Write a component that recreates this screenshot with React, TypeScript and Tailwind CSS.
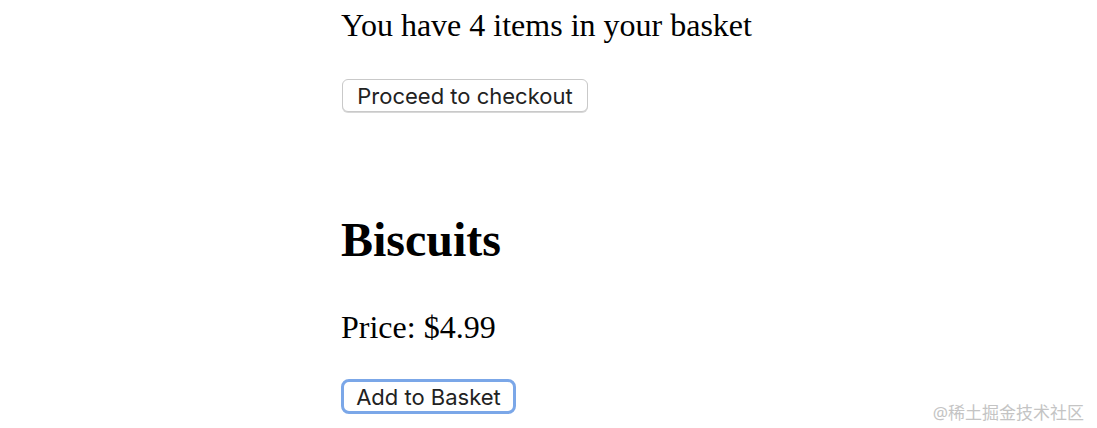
export default function App() {
  return (
    <div className="relative w-[1097px] h-[428px] bg-white overflow-hidden">
      <div className="pl-[341px] pt-[7px] flex flex-col items-start font-['Liberation_Serif',serif] text-black">
        <p className="text-[32px] leading-[37px]">You have 4 items in your basket</p>

        <button className="mt-[35px] ml-px h-[33px] w-[246px] rounded-[6px] border border-[#c9c9c9] bg-white shadow-[0_1px_0_#d8d8d8] text-[22px] leading-none text-[#222] font-['Inter',sans-serif]">
          Proceed to checkout
        </button>

        <h2 className="mt-[100px] text-[48px] leading-[55px] font-bold">Biscuits</h2>

        <p className="mt-[42px] text-[32px] leading-[37px]">Price: $4.99</p>

        <button className="mt-[33px] h-[35px] w-[175px] rounded-[8px] border-[3px] border-[#7ba7e8] bg-white text-[22px] leading-none text-[#222] font-['Inter',sans-serif]">
          Add to Basket
        </button>
      </div>

      <span className="absolute right-[13px] bottom-[7px] text-[17px] leading-none text-[#c4c4c4] font-['Noto_Sans','Noto_Sans_CJK_SC',sans-serif]">
        @稀土掘金技术社区
      </span>
    </div>
  );
}
